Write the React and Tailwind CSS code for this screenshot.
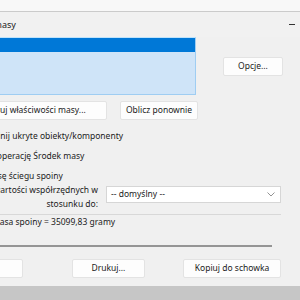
import React from 'react';

function Btn({ className = '', children }) {
  return (
    <div
      className={`flex items-center justify-center rounded-[2px] border border-[#e3e3e3] bg-[#fdfdfd] text-[#1b1b1b] ${className}`}
    >
      {children}
    </div>
  );
}

export default function App() {
  return (
    <div
      className="h-[300px] w-[300px] overflow-hidden bg-[#c6c6c6] text-[8.5px] text-[#1b1b1b]"
      style={{ fontFamily: '"Noto Sans", "Open Sans", sans-serif' }}
    >
      <div className="ml-[-80px] flex h-[286px] w-[380px] flex-col bg-[#f0f0f0]">
        {/* strip above the title bar */}
        <div className="h-[12px] border-b border-[#cbcbcb] bg-[#f8f8f8]" />

        {/* title bar */}
        <div className="flex h-[25px] items-center bg-[#f1f1f1]">
          <span className="ml-[21px] text-[9px]">Właściwości masy</span>
          <div className="ml-auto mr-[5px] h-px w-[6px] bg-[#333]" />
        </div>

        {/* list + options */}
        <div className="flex">
          <div className="ml-[10px] flex h-[58px] w-[266px] flex-col border border-[#9fcdf2] border-t-[#bfe3fb] bg-[#cfe4f8]">
            <div className="h-[14px] bg-[#0078d7]" />
          </div>
          <Btn className="ml-[27px] mt-[20px] h-[19px] w-[60px]">Opcje...</Btn>
        </div>

        {/* buttons row */}
        <div className="mt-[6px] flex">
          <Btn className="ml-[10px] h-[19px] w-[177px] pl-[14px]">Konfiguruj właściwości masy...</Btn>
          <Btn className="ml-[13px] h-[19px] w-[78px]">Oblicz ponownie</Btn>
        </div>

        {/* checkboxes */}
        <div className="mt-[9px] flex flex-col gap-[6px] pl-[46px] leading-[14px]">
          <div className="h-[14px]">Uwzględnij ukryte obiekty/komponenty</div>
          <div className="h-[14px]">Utwórz operację Środek masy</div>
          <div className="-ml-[4px] h-[14px]">Ujmij masę ściegu spoiny</div>
        </div>

        {/* coordinates */}
        <div className="flex">
          <div className="ml-[10px] w-[168px] text-right leading-[14px]">
            Raportuj wartości współrzędnych w
            <br />
            stosunku do:
          </div>
          <div className="ml-[8px] mt-[3px] flex h-[17px] w-[175px] items-center justify-between border border-[#d6d6d6] bg-white pl-[4px] pr-[5px]">
            <span>-- domyślny --</span>
            <svg width="8" height="5" viewBox="0 0 8 5" fill="none" stroke="#777" strokeWidth="0.8">
              <polyline points="0.5,0.5 4,4 7.5,0.5" />
            </svg>
          </div>
        </div>

        <div className="ml-[10px] mt-[3px] h-px w-[351px] bg-[#d8d8d8]" />
        <div className="ml-[72px] mt-px leading-[12px]">Masa spoiny = 35099,83 gramy</div>
        <div className="ml-[10px] mt-[17px] h-[2px] w-[342px] bg-[#959595]" />

        {/* bottom buttons */}
        <div className="mt-[12px] flex">
          <Btn className="ml-[30px] h-[19px] w-[73px]">OK</Btn>
          <Btn className="ml-[49px] h-[19px] w-[73px]">Drukuj...</Btn>
          <Btn className="ml-[38px] h-[19px] w-[98px]">Kopiuj do schowka</Btn>
        </div>
      </div>
    </div>
  );
}
